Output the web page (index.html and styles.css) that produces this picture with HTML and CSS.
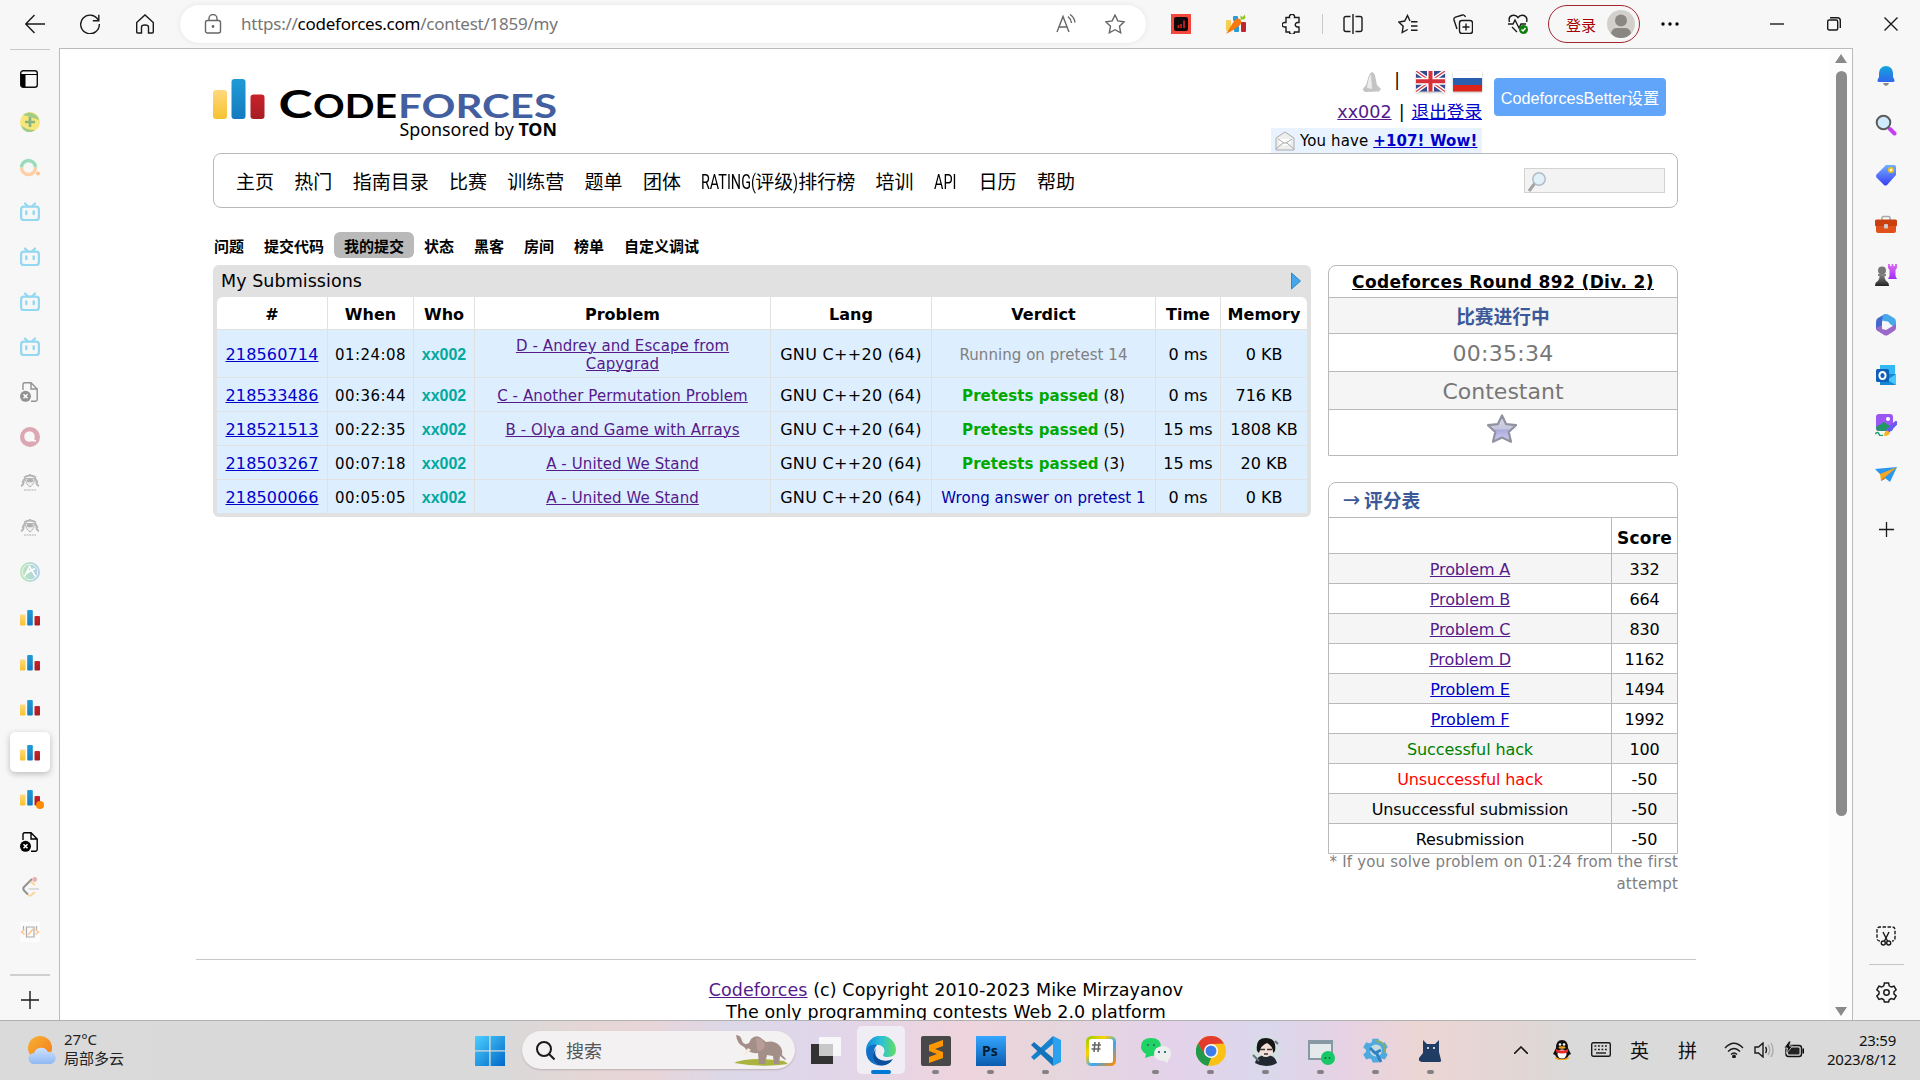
FILE: index.html
```html
<!DOCTYPE html>
<html lang="zh-CN">
<head>
<meta charset="utf-8">
<title>Codeforces</title>
<link rel="stylesheet" href="styles.css">
</head>
<body>
<svg class="defs" width="0" height="0">
  <defs>
    <linearGradient id="gy" x2="0" y2="1"><stop stop-color="#ffd97d"/><stop offset="1" stop-color="#f5c22e"/></linearGradient>
    <linearGradient id="gb" x2="0" y2="1"><stop stop-color="#1f9bd7"/><stop offset="1" stop-color="#147abf"/></linearGradient>
    <linearGradient id="gr" x2="0" y2="1"><stop stop-color="#c9222b"/><stop offset="1" stop-color="#a51d24"/></linearGradient>
    <linearGradient id="gbell" x2="0" y2="1"><stop stop-color="#12a5dd"/><stop offset="1" stop-color="#2f68ee"/></linearGradient>
    <linearGradient id="gtag" x2="0" y2="1"><stop stop-color="#6fb0ff"/><stop offset="1" stop-color="#3a3df5"/></linearGradient>
    <linearGradient id="gpur" x2="0" y2="1"><stop stop-color="#e070f5"/><stop offset="1" stop-color="#a02cf5"/></linearGradient>
    <linearGradient id="gblk" x2="0" y2="1"><stop stop-color="#8a8a8a"/><stop offset="1" stop-color="#222"/></linearGradient>
    <linearGradient id="gwin" x2="1" y2="1"><stop stop-color="#4cd0ff"/><stop offset="1" stop-color="#0067c8"/></linearGradient>
    <linearGradient id="gedge" x2="1" y2="0"><stop stop-color="#1487dc"/><stop offset=".5" stop-color="#2bc0d8"/><stop offset="1" stop-color="#62de62"/></linearGradient>
    <linearGradient id="gstar" x2="0" y2="1"><stop stop-color="#dcdce4"/><stop offset=".5" stop-color="#c6c6de"/><stop offset=".55" stop-color="#acacdc"/><stop offset="1" stop-color="#cfcff4"/></linearGradient>
    <linearGradient id="gps" x2="0" y2="1"><stop stop-color="#35a6ff"/><stop offset="1" stop-color="#0a5cae"/></linearGradient>
    <linearGradient id="gsun" x2="1" y2="1"><stop stop-color="#f9b233"/><stop offset="1" stop-color="#f07a1c"/></linearGradient>
    <linearGradient id="gcloud" x2="0" y2="1"><stop stop-color="#cfe2ff"/><stop offset="1" stop-color="#8fb9f2"/></linearGradient>
    <linearGradient id="gac" x2="1" y2="0"><stop stop-color="#b9e7b4"/><stop offset="1" stop-color="#b0d0ea"/></linearGradient>
    <linearGradient id="gnote" x2="1" y2="1"><stop stop-color="#9bd000"/><stop offset=".3" stop-color="#ffd000"/><stop offset=".6" stop-color="#38a8ff"/><stop offset="1" stop-color="#ff8a00"/></linearGradient>
    <symbol id="cf" viewBox="0 0 20 16"><rect y="4.500" width="5.500" height="11" rx="1" fill="url(#gy)"/><rect x="7.200" width="5.600" height="15.500" rx="1" fill="url(#gb)"/><rect x="14.500" y="6" width="5.500" height="9.500" rx="1" fill="url(#gr)"/></symbol>
    <symbol id="bili" viewBox="0 0 20 20"><path d="M5 1.500 8 4.500M15 1.500 12 4.500" stroke="#93d8f0" stroke-width="2.200" stroke-linecap="round"/><rect x="1.100" y="4.600" width="17.800" height="13.400" rx="2.800" fill="none" stroke="#93d8f0" stroke-width="2.200"/><path d="M6.300 9.500v2.500M13.700 9.500v2.500" stroke="#93d8f0" stroke-width="2.400" stroke-linecap="round"/></symbol>
    <symbol id="doc" viewBox="0 0 20 20"><path d="M3 8V2.500Q3 .8 4.700 .8H11L17.200 7V17.500Q17.200 19.200 15.500 19.200H11M11 .8V7H17.200" fill="none" stroke="currentColor" stroke-width="1.400"/><circle cx="5.500" cy="14.300" r="5.500" fill="currentColor"/><path d="m3.500 12.300 4 4m0-4-4 4" stroke="#fff" stroke-width="1.500"/></symbol>
    <symbol id="atc" viewBox="0 0 20 20"><path d="M10 2v2M4 5.500Q10 1.500 16 5.500M2.500 11Q4 7 5.500 6.500M17.500 11Q16 7 14.500 6.500M1 14Q4 13 3.500 9.500M19 14Q16 13 16.500 9.500" fill="none" stroke="#b5b5b5" stroke-width="1.900"/><path d="M5.500 6.500h9Q14.500 12 10 15 5.500 12 5.500 6.500Z" fill="#eee" stroke="#b5b5b5"/><ellipse cx="10" cy="8.500" rx="3.400" ry="1.800" fill="#b0b0b0"/><path d="M4 18h12" stroke="#c8c8c8" stroke-width="1.600" stroke-dasharray="2 .6"/></symbol>
    <symbol id="gear" viewBox="0 0 20 20"><path d="M8 1h4l.6 2.700 1.900 1.100L17.200 4l2 3.400-2.100 1.900v2l2.100 1.900-2 3.400-2.700-.8-1.900 1.100L12 19H8l-.6-2.100-1.900-1.100-2.700.8-2-3.400 2.100-1.900v-2L.8 7.400 2.800 4l2.700.8 1.900-1.100Z"/><circle cx="10" cy="10" r="2.600"/></symbol>
  </defs>
</svg>

<header class="toolbar">
  <div class="nav-btns">
    <svg class="ln" viewBox="0 0 20 20"><path d="M20 10H1M9.500 1 .8 10l8.700 9"/></svg>
    <svg class="ln" viewBox="0 0 20 20"><path d="M18.300 6.200A9.300 9.300 0 1 0 19.300 10M18.800 .8v6h-6"/></svg>
    <svg class="ln" viewBox="0 0 20 20"><path d="M1.700 8.500 10 .9l8.300 7.600V18q0 1-1 1h-3.800v-6q0-2-3.500-2t-3.500 2v6H2.700q-1 0-1-1Z"/></svg>
  </div>
  <div class="address">
    <svg class="ln lock" viewBox="0 0 18 20"><rect x="1.500" y="6.500" width="15" height="12.500" rx="2"/><path d="M5 6.500V4.500a4 4 0 0 1 8 0v2"/><circle cx="9" cy="12.500" r=".7" fill="#666"/></svg>
    <span class="url">https://<b>codeforces.com</b>/contest/1859/my</span>
    <svg class="ln" viewBox="0 0 20 20"><path d="M1 18 7 2.500 13 18M3 13h8M12 2.500Q15 5 15.500 9M14 .5q4.500 3 5 8"/></svg>
    <svg class="ln" viewBox="0 0 20 20"><path d="m10 1 2.800 5.900 6.400.9-4.700 4.500 1.200 6.500L10 15.700l-5.700 3.100 1.200-6.500L.8 7.800l6.400-.9Z"/></svg>
  </div>
  <div class="exts">
    <svg viewBox="0 0 20 20"><path fill="#f5483c" d="M0 0h20v20H0z"/><rect x="3" y="3" width="14" height="14" rx="2" fill="#100808"/><path d="M7.500 14v-3M10 14v-4M13 14V6.500" stroke="#c4251c" stroke-width="1.700"/></svg>
    <svg viewBox="0 0 20 20"><rect y="6" width="5" height="11" rx="1" fill="#f8cd55"/><rect x="7" y="2" width="5" height="5" rx="1" fill="#2a9bd8"/><rect x="8" y="12" width="5" height="6" rx="1" fill="#2a9bd8"/><rect x="15" y="8" width="5" height="10" rx="1" fill="#c0262d"/><path d="M0 20 8 7q3-4 6.500-1.500 2 3-1 6Q8 16 0 20Z" fill="#f77a0c"/><path d="M14.500 5.500V1.500l2 1.500 2.500-2.500v2.500h1l-2 2.500Z" fill="#8fc926"/></svg>
    <svg class="ln puzzle" viewBox="0 0 20 20"><path d="M4 3.500h3.500a2.600 2.600 0 1 1 5 0H17v5h-1.500a2.200 2.200 0 1 0 0 4.500H17v5h-4.500a2.500 2.500 0 0 1-5 0H4V13H3a2.300 2.300 0 1 1 0-4.500h1Z"/></svg>
    <i class="vbar"></i>
    <svg class="ln" viewBox="0 0 20 20"><path d="M7.500 2.500H3Q1 2.500 1 4.500v11q0 2 2 2h4.500M12.500 2.500H17q2 0 2 2v11q0 2-2 2h-4.500M10 0v20"/></svg>
    <svg class="ln" viewBox="0 0 20 20"><path d="M13 7.700H19.500M13 12h6.500M13 16.300h6.500M12 7 9.500 1.500 6.700 7 .8 8l4.400 4.200-1 6.300 5.500-3"/></svg>
    <svg class="ln" viewBox="0 0 20 20"><rect x="6.500" y="6.500" width="13" height="13" rx="2.500"/><path d="M13 9.500v7M9.500 13h7M4 15 1 6Q.5 4 2.500 3.200L9.500 1q2-.5 3 2"/></svg>
    <svg class="ln" viewBox="0 0 20 20"><path d="M1.500 8Q0 3 4 1.500q4-1 6 2 2-3 6-2 4 2 2.500 6.500M0 10h5l2-4 4 8 2-4h5M4 13l5 5"/><circle cx="15.500" cy="15.500" r="4.500" fill="#107c10" stroke="none"/><path d="m13.500 15.500 1.500 1.500 2.500-3" stroke="#fff"/></svg>
  </div>
  <div class="login"><span>登录</span><svg viewBox="0 0 28 28"><circle cx="14" cy="14" r="14" fill="#d3d0cb"/><circle cx="14" cy="10.500" r="6" fill="#8a8782"/><path d="M4 23.500Q5 18 10 18h8q5 0 6 5.500Q20 28 14 28T4 23.500Z" fill="#8a8782"/></svg></div>
  <svg class="more" viewBox="0 0 18 4"><circle cx="2" cy="2" r="1.700"/><circle cx="9" cy="2" r="1.700"/><circle cx="16" cy="2" r="1.700"/></svg>
  <div class="win-btns">
    <svg class="ln" viewBox="0 0 14 14"><path d="M0 7h14"/></svg>
    <svg class="ln" viewBox="0 0 14 14"><rect x=".7" y="3" width="10" height="10" rx="1.500"/><path d="M3 .7h7.500q2.800 0 2.800 2.800V11"/></svg>
    <svg class="ln" viewBox="0 0 14 14"><path d="m.5 .5 13 13m0-13-13 13"/></svg>
  </div>
</header>

<div class="middle">
<aside class="tabs">
  <svg class="panel" viewBox="0 0 20 20"><rect x=".7" y="1.700" width="16.600" height="16.600" rx="2.500" fill="none" stroke="#111" stroke-width="1.400"/><path d="M1 5.500h4.500V18H3q-2 0-2-2ZM1 5h16.500v1H1z" fill="#000"/></svg>
  <div class="tab"><svg viewBox="0 0 20 20"><circle cx="10" cy="10" r="10" fill="#f7e67a"/><path d="M3 3q6-5 13 0 3 3 3 5Q12 5 3 3ZM1 13q5 5 14 5-5 4-10 1-3-2-4-6Z" fill="#a0cc88"/><path d="M10 5v10M5 10h10" stroke="#86b482" stroke-width="2.600"/></svg></div>
  <div class="tab"><svg viewBox="0 0 20 20"><path d="M1.500 10.500a7 7 0 0 1 14 0" fill="none" stroke="#98dcba" stroke-width="3.400"/><path d="M1.500 10.500a7 7 0 0 0 14 0" fill="none" stroke="#fdd0a5" stroke-width="3.400"/><circle cx="18" cy="16.500" r="2" fill="#fcc18c"/></svg></div>
  <div class="tab"><svg><use href="#bili"/></svg></div>
  <div class="tab"><svg><use href="#bili"/></svg></div>
  <div class="tab"><svg><use href="#bili"/></svg></div>
  <div class="tab"><svg><use href="#bili"/></svg></div>
  <div class="tab dim"><svg><use href="#doc"/></svg></div>
  <div class="tab"><svg viewBox="0 0 20 20"><circle cx="10" cy="10" r="10" fill="#dba7b2"/><circle cx="9.500" cy="9.500" r="5.300" fill="#f7f7f7"/><path d="m11 11 5 3-3.500 0Z" fill="#fff" stroke="#fff"/></svg></div>
  <div class="tab"><svg><use href="#atc"/></svg></div>
  <div class="tab"><svg><use href="#atc"/></svg></div>
  <div class="tab"><svg viewBox="0 0 20 20"><circle cx="10" cy="10" r="10" fill="url(#gac)"/><circle cx="10" cy="10" r="7.800" fill="none" stroke="#fff" stroke-opacity=".7"/><path d="m4.500 14.500 5-10 6 10M7 11.500l4-3 4-2M7 9h5" fill="none" stroke="#fff" stroke-width="1.500"/></svg></div>
  <div class="tab"><svg class="bars"><use href="#cf"/></svg></div>
  <div class="tab"><svg class="bars"><use href="#cf"/></svg></div>
  <div class="tab"><svg class="bars"><use href="#cf"/></svg></div>
  <div class="tab"><span class="tile"><svg class="bars"><use href="#cf"/></svg></span></div>
  <div class="tab"><svg class="bars"><use href="#cf"/></svg><i class="badge"></i></div>
  <div class="tab"><svg><use href="#doc"/></svg></div>
  <div class="tab"><svg viewBox="0 0 20 20"><path d="M12 2 4 10q-1.500 1.500 0 3.500L8 17.500" fill="none" stroke="#929292" stroke-width="2"/><path d="M10.500 4.500 15 8M8 17.500q2 2.500 4 0l3-2.500" fill="none" stroke="#fbd49a" stroke-width="2"/><path d="M8.500 12H19" stroke="#dcdcdc" stroke-width="2"/><circle cx="14.700" cy="2.500" r="2.400" fill="#eab0b0"/></svg></div>
  <div class="tab"><svg viewBox="0 0 20 20"><path fill="#fcfcfc" d="M0 0h20v20H0z"/><path d="M6.500 5h7.500v10H6.500zM3.500 4v4M16.500 4v4" fill="none" stroke="#aaa" stroke-width="1.200"/><path d="M4.500 7.500 1.500 10l3 2.500M15.500 7.500l3 2.500-3 2.500M8 13l5-6" fill="none" stroke="#fbc590" stroke-width="1.500"/></svg></div>
  <i class="sep"></i>
  <svg class="ln plus" viewBox="0 0 18 18"><path d="M9 0v18M0 9h18"/></svg>
</aside>

<main class="viewport">
 <div class="page">
  <div class="head">
    <svg class="logo" viewBox="0 0 344 62">
      <rect y="11" width="14" height="29" rx="3" fill="url(#gy)"/><rect x="18.500" width="14" height="40" rx="3" fill="url(#gb)"/><rect x="37.500" y="15.500" width="14" height="24.500" rx="3" fill="url(#gr)"/>
      <g class="logo-word"><text x="65.500" y="39" font-size="38.500" textLength="34" lengthAdjust="spacingAndGlyphs">C</text><text x="100" y="39" font-size="32" textLength="84" lengthAdjust="spacingAndGlyphs">ODE</text><text x="185" y="39" font-size="32" fill="#445f9f" textLength="159" lengthAdjust="spacingAndGlyphs">FORCES</text></g>
      <text class="sponsor" x="186.500" y="56.500" textLength="157.500" lengthAdjust="spacingAndGlyphs">Sponsored by <tspan font-weight="bold">TON</tspan></text>
    </svg>
    <div class="user">
      <div class="line1">
        <svg width="20" height="20" viewBox="0 0 20 20"><path d="M10 0q3 1 3.500 6L15 13l4 4-2 2.500-14 .5-2.500-2.500L4 13l2.500-8Q7.500 1 10 0Z" fill="#c4c4c4"/><path d="M9 2Q6 7 5 16l5 1Z" fill="#ececec"/></svg>
        <span>|</span>
        <svg class="flag" width="29" height="22" viewBox="0 0 29 22"><path fill="#36498f" d="M0 0h29v20.500H0z"/><path d="m0 0 29 20.500M29 0 0 20.500" stroke="#fff" stroke-width="4"/><path d="m0 0 29 20.500M29 0 0 20.500" stroke="#d8404a" stroke-width="1.400"/><path d="M14.500 0v20.500M0 10.200h29" stroke="#fff" stroke-width="7"/><path d="M14.500 0v20.500M0 10.200h29" stroke="#d8303a" stroke-width="4"/></svg>
        <svg class="flag" width="29" height="22" viewBox="0 0 29 22"><path fill="#fff" d="M0 0h29v7H0z"/><path fill="#2a5fb0" d="M0 7h29v7H0z"/><path fill="#dc2418" d="M0 14h29v6.500H0z"/></svg>
      </div>
      <div class="line2"><a class="v">xx002</a><span>|</span><a>退出登录</a></div>
      <div class="line3"><svg width="20" height="20" viewBox="0 0 20 20"><path d="M1 7 10 1l9 6v12H1Z" fill="#eee" stroke="#aaa"/><path d="M4 8h12v4l-6 3-6-3Z" fill="#fff"/><path d="m1 18 7-6h4l7 6M3 8l6 4M17 8l-6 4" fill="none" stroke="#aaa"/></svg><span>You have</span><a>+107! Wow!</a></div>
    </div>
    <div class="better">CodeforcesBetter设置</div>
  </div>

  <nav class="menu">
    <a>主页</a><a>热门</a><a>指南目录</a><a>比赛</a><a>训练营</a><a>题单</a><a>团体</a><a class="rating"><i>RATING(</i>评级<i>)</i>排行榜</a><a>培训</a><a class="api"><i>API</i></a><a>日历</a><a>帮助</a>
    <div class="search"><svg width="20" height="22" viewBox="0 0 20 22"><path d="M8 12 2 20" stroke="#a4a4a4" stroke-width="3"/><circle cx="12" cy="8" r="6.200" fill="#dff1fb" stroke="#b4bcc4" stroke-width="1.500"/></svg></div>
  </nav>

  <nav class="submenu"><a>问题</a><a>提交代码</a><a class="on">我的提交</a><a>状态</a><a>黑客</a><a>房间</a><a>榜单</a><a>自定义调试</a></nav>

  <div class="columns">
    <section class="subs">
      <div class="subs-title"><span>My Submissions</span><svg width="10" height="18" viewBox="0 0 10 18"><path d="M.5 1 9.500 9 .5 17Z" fill="#45a6ea" stroke="#2f86cc"/></svg></div>
      <table>
        <colgroup><col class="c1"><col class="c2"><col class="c3"><col class="c4"><col class="c5"><col class="c6"><col class="c7"><col class="c8"></colgroup>
        <tr><th>#</th><th>When</th><th>Who</th><th>Problem</th><th>Lang</th><th>Verdict</th><th>Time</th><th>Memory</th></tr>
        <tr class="tall"><td class="id"><a>218560714</a></td><td class="when">01:24:08</td><td class="who">xx002</td><td class="prob"><a class="v">D - Andrey and Escape from<br>Capygrad</a></td><td class="lang">GNU C++20 (64)</td><td class="verdict run">Running on pretest 14</td><td>0 ms</td><td>0 KB</td></tr>
        <tr><td class="id"><a>218533486</a></td><td class="when">00:36:44</td><td class="who">xx002</td><td class="prob"><a class="v">C - Another Permutation Problem</a></td><td class="lang">GNU C++20 (64)</td><td class="verdict"><b>Pretests passed</b> (8)</td><td>0 ms</td><td>716 KB</td></tr>
        <tr><td class="id"><a>218521513</a></td><td class="when">00:22:35</td><td class="who">xx002</td><td class="prob"><a class="v">B - Olya and Game with Arrays</a></td><td class="lang">GNU C++20 (64)</td><td class="verdict"><b>Pretests passed</b> (5)</td><td>15 ms</td><td>1808 KB</td></tr>
        <tr><td class="id"><a>218503267</a></td><td class="when">00:07:18</td><td class="who">xx002</td><td class="prob"><a class="v">A - United We Stand</a></td><td class="lang">GNU C++20 (64)</td><td class="verdict"><b>Pretests passed</b> (3)</td><td>15 ms</td><td>20 KB</td></tr>
        <tr><td class="id"><a>218500066</a></td><td class="when">00:05:05</td><td class="who">xx002</td><td class="prob"><a class="v">A - United We Stand</a></td><td class="lang">GNU C++20 (64)</td><td class="verdict wrong">Wrong answer on pretest 1</td><td>0 ms</td><td>0 KB</td></tr>
      </table>
    </section>

    <aside class="side">
      <div class="box contest">
        <div class="r1"><a>Codeforces Round 892 (Div. 2)</a></div>
        <div class="r2">比赛进行中</div>
        <div class="r3">00:35:34</div>
        <div class="r4">Contestant</div>
        <div class="r5"><svg width="32" height="32" viewBox="0 0 32 32"><path d="m16 2.500 4.200 8.700 9.800 1-7.300 6.800 2.300 9.800L16 24.500 7 28.800l2.300-9.800L2 12.200l9.800-1Z" fill="url(#gstar)" stroke="#9092a0" stroke-width="2.200" stroke-linejoin="round"/></svg></div>
      </div>
      <div class="box scores">
        <div class="cap"><span>→</span>评分表</div>
        <div class="row first"><div></div><div>Score</div></div>
        <div class="row"><div><a class="v">Problem A</a></div><div>332</div></div>
        <div class="row"><div><a class="v">Problem B</a></div><div>664</div></div>
        <div class="row"><div><a class="v">Problem C</a></div><div>830</div></div>
        <div class="row"><div><a class="v">Problem D</a></div><div>1162</div></div>
        <div class="row"><div><a>Problem E</a></div><div>1494</div></div>
        <div class="row"><div><a>Problem F</a></div><div>1992</div></div>
        <div class="row"><div class="ok">Successful hack</div><div>100</div></div>
        <div class="row"><div class="bad">Unsuccessful hack</div><div>-50</div></div>
        <div class="row"><div>Unsuccessful submission</div><div>-50</div></div>
        <div class="row"><div>Resubmission</div><div>-50</div></div>
      </div>
      <p class="hint">* If you solve problem on 01:24 from the first<br>attempt</p>
    </aside>
  </div>
  <footer class="foot"><div><a class="v">Codeforces</a> (c) Copyright 2010-2023 Mike Mirzayanov</div><div>The only programming contests Web 2.0 platform</div></footer>
 </div>
 <div class="scroll"><i class="up"></i><i class="thumb"></i><i class="down"></i></div>
</main>

<aside class="rail">
  <div><svg viewBox="0 0 22 22"><path d="M4 18q-2 0-1.500-2L4 13V9a7 7 0 0 1 14 0v4l1.500 3q.5 2-1.500 2Z" fill="url(#gbell)"/><path d="M8 19h6q-1 3-3 3t-3-3Z" fill="#888"/></svg></div>
  <div><svg viewBox="0 0 22 22"><path d="m15 15 4.500 4.500" stroke="#c540f5" stroke-width="4" stroke-linecap="round"/><circle cx="8.500" cy="8.500" r="6.800" fill="#cfeafc" stroke="#5c5c5c" stroke-width="2"/></svg></div>
  <div><svg viewBox="0 0 22 22"><path d="M11 1h8q2 0 2 2v8L12 21q-1.500 1-3 0L1.500 13.500q-1-1.500 0-3Z" fill="url(#gtag)"/><circle cx="16" cy="6" r="2.200" fill="#ffd" stroke="#f0c020" stroke-width="1.700"/></svg></div>
  <div><svg viewBox="0 0 22 22"><path d="M7 6V4q0-1.500 1.500-1.500h5Q15 2.500 15 4v2" fill="none" stroke="#a9a9a9" stroke-width="1.600"/><rect y="5.500" width="22" height="7" rx="1.500" fill="#c8400f"/><path d="M1 12h20v5q0 2-2 2H3q-2 0-2-2Z" fill="#e0501a"/><rect x="9" y="10" width="4" height="4.500" rx="1" fill="#ccc"/></svg></div>
  <div><svg viewBox="0 0 22 22"><path d="M13 0h2v2h1.500V0h2v2H20V0h2v4l-1.500 2v6l1.500 3h-9l1.500-3V6L13 4Z" fill="url(#gpur)"/><circle cx="7" cy="6.500" r="4" fill="#777"/><path d="M3 10h8v2H9.500q0 4 3 6 1.500 1 1.500 4H0q0-3 1.500-4 3-2 3-6H3Z" fill="url(#gblk)"/></svg></div>
  <div><svg viewBox="0 0 22 22"><path d="M10 0 3 4Q1 5 1 8v6q0 2 2 3l4 2V8Z" fill="#4468cc"/><path d="M10 0q1-.5 3 .5L19 4q2 1 2 4v6l-6-4-8-4 1-5Z" fill="#45a9ec"/><path d="m1 14 6-3v4l4 1 10-6v4q0 2-2 3l-6 4q-2 1-4 0l-6-4q-2-1-2-3Z" fill="#9a68c8"/><circle cx="11" cy="11" r="3.800" fill="#f7f7f7"/></svg></div>
  <div><svg viewBox="0 0 22 22"><rect x="5" y="1" width="15" height="10" fill="#31b9f5"/><path d="M5 10h16v11H5z" fill="#1787d4"/><path d="m21 10-9 6 9 5Z" fill="#42c8fa"/><rect x="1" y="5" width="13" height="13" rx="1.500" fill="#0f5fb8"/><ellipse cx="7.500" cy="11.500" rx="3.100" ry="3.600" fill="none" stroke="#fff" stroke-width="2"/></svg></div>
  <div><svg viewBox="0 0 22 22"><rect x="1" width="17" height="17" rx="3" fill="#9b57f2"/><circle cx="13" cy="5" r="2" fill="#fff"/><path d="m1 13 8-5 9 6q0 3-3 3H4q-3 0-3-4Z" fill="#22966a"/><path d="m21 9-8 8" stroke="#6b5af0" stroke-width="4" stroke-linecap="round"/><path d="M9 22q0-5 3.500-5.500L15 19q-1 3-6 3Z" fill="#f5b51e"/><path d="M0 20q3-3 4 0t4 1" stroke="#1ca372" stroke-width="1.500" fill="none"/></svg></div>
  <div><svg viewBox="0 0 22 22"><path d="M0 5 22 3 15 18 10 14 6 17V11Z" fill="#2b96ee"/><path d="M5 10 22 3 9 14 6 17Z" fill="#f5a623"/><path d="m9 13-3 4 4-2Z" fill="#c77a0c"/></svg></div>
  <svg class="ln rplus" viewBox="0 0 16 16"><path d="M8 0v16M0 8h16"/></svg>
  <svg class="ln snip" viewBox="0 0 20 20"><path d="M4 15Q1 15 1 12V4q0-3 3-3h12q3 0 3 3v8q0 3-3 3" stroke-dasharray="3.500 1.500"/><path d="m7 6 4.500 9M13 6l-4.500 9"/><circle cx="7.300" cy="17" r="2"/><circle cx="12.700" cy="17" r="2"/></svg>
  <i class="rsep"></i>
  <svg class="ln rgear" viewBox="0 0 20 20"><use href="#gear"/></svg>
</aside>
</div>

<footer class="taskbar">
  <div class="weather"><svg width="30" height="30" viewBox="0 0 30 30"><circle cx="13" cy="12" r="12" fill="url(#gsun)"/><path d="M7 28a5.500 5.500 0 0 1 0-11 7.500 7.500 0 0 1 14-1 6 6 0 0 1 3 12Z" fill="url(#gcloud)"/></svg><div>27°C<br>局部多云</div></div>
  <div class="app"><svg viewBox="0 0 30 30"><path d="M0 0h14.200v14.200H0zM15.600 0H30v14.200H15.600zM0 15.600h14.200V30H0zM15.600 15.600H30V30H15.600z" fill="url(#gwin)"/></svg></div>
  <div class="find"><svg class="ln" width="19" height="19" viewBox="0 0 19 19"><circle cx="8" cy="8" r="7"/><path d="m13 13 5.500 5.500"/></svg><span>搜索</span>
    <svg class="ele" width="54" height="32" viewBox="0 0 54 32"><path d="M0 29q15-7 50-2l4 3q-25 4-54-1Z" fill="#a9b33e"/><path d="M2 1q5 0 6 6 2 5 7 2l2-4q5-5 10-1l5 4q8-2 13 3 4 4 3 10l4 4-1 1-5-4-1 8h-5l-1-8-6-1-2 9h-6l-1-11q-9 1-14-6Q3 10 2 1Z" fill="#a48f88"/><path d="M22 4q8 0 9 8-3 7-8 4Z" fill="#b79c98"/><path d="m14 14-4 6 1 1 6-5Z" fill="#f6ecd8"/></svg></div>
  <div class="app"><svg viewBox="0 0 30 30"><path fill="#333" d="M0 8h22v20H0z"/><path fill="#fafafa" fill-opacity=".9" d="M8 1h22v19H8z"/><path fill="#c8c8c8" d="M8 8h14v12H8z"/></svg></div>
  <div class="app cur"><span><svg viewBox="0 0 30 30"><path d="M0 15A15 15 0 0 1 30 14q0 7-8 7-5 0-5-2 3-4 0-8Q11 6 3 12Z" fill="url(#gedge)"/><path d="M0 15q4-8 11-6-6 6-1 14 5 6 14 3-8 6-16 2Q0 24 0 15Z" fill="#126fc4"/><path d="M10 12q-3 9 5 12 6 2 12-1-5 8-14 6-10-6-3-17Z" fill="#0c4f9c"/></svg><i></i></span></div>
  <div class="app"><svg viewBox="0 0 30 30"><rect width="30" height="30" rx="2" fill="#484848"/><path d="M22 4v6l-8 3 8 3v6L8 27v-6l8-3-8-3V9Z" fill="#ff9800"/></svg><i></i></div>
  <div class="app"><svg viewBox="0 0 30 30"><path fill="url(#gps)" d="M0 0h30v30H0z"/><text class="ps" x="6" y="20">Ps</text></svg><i></i></div>
  <div class="app"><svg viewBox="0 0 30 30"><path d="m22 0 8 4v22l-8 4Z" fill="#2aa0ee"/><path d="M22 0v8L3 24l-3-3Z" fill="#1482ce"/><path d="M22 30v-8L3 6 0 9Z" fill="#1273ba"/></svg><i></i></div>
  <div class="app"><svg viewBox="0 0 30 30"><rect x="1.500" y="1.500" width="27" height="27" rx="4" fill="#fff" stroke="url(#gnote)" stroke-width="3"/><path d="M9 6 8 16M13 6l-1 10M6 9h9M5.500 13h9" stroke="#666" stroke-width="1.600"/></svg></div>
  <div class="app"><svg viewBox="0 0 30 30"><path d="M10 2q10 0 10 9t-10 9l-6 2 1-4q-5-3-5-7 0-9 10-9Z" fill="#1fd365"/><path d="M21 10q9 0 9 8 0 4-3 6v3l-4-2q-10 0-10-7t8-8Z" fill="#eee"/><path d="M7 8v2m6-2v2M18 15v2m6-2v2" stroke="#377" stroke-width="2"/></svg><i></i></div>
  <div class="app"><svg viewBox="0 0 30 30"><circle cx="15" cy="15" r="15" fill="#fbc116"/><path d="M2 7.500A15 15 0 0 1 28 7.500L15 8l-6.500 11Z" fill="#e33b2e"/><path d="M2 7.500 9 19l6 3-3 8A15 15 0 0 1 2 7.500Z" fill="#229a4c"/><circle cx="15" cy="15" r="7" fill="#fff"/><circle cx="15" cy="15" r="5.500" fill="#3d7de8"/></svg><i></i></div>
  <div class="app"><svg viewBox="0 0 30 30"><circle cx="15" cy="15" r="15" fill="#d3dfe2"/><path d="M4 27q2-8 11-8t11 8q-5 3-11 3T4 27Z" fill="#222831"/><path d="M8 9q7-6 14 0v6q-2 6-7 6t-7-6Z" fill="#f4dfd6"/><path d="M6 15Q4 2 15 2t9 13l-2 2q0-7-6-10-6 2-8 10Z" fill="#161616"/><path d="M9 13.500h5m2 0h5M13 18h4" stroke="#333" stroke-width="1.400"/><path d="m2 19 6 6M24 5l3 3" stroke="#68747b" stroke-width="2"/></svg><i></i></div>
  <div class="app"><svg viewBox="0 0 30 30"><rect x="3" y="5" width="23" height="18" fill="#e4e9ec" stroke="#8799a5" stroke-width="2"/><path d="M3 5h23v3H3z" fill="#8799a5"/><circle cx="22" cy="22" r="7" fill="#18c765"/><path d="M19.500 21v2m4-2v2" stroke="#164" stroke-width="1.500"/></svg><i></i></div>
  <div class="app"><svg viewBox="0 0 30 30"><g fill="#50a9df" stroke="#50a9df"><use href="#gear" x="2" y="2" width="25" height="25"/></g><path d="M14 5q11 0 10 12" stroke="#7fae74" stroke-width="2" fill="none"/><circle cx="15" cy="14.500" r="6" fill="#c7dbe2"/><path d="m9 12 5 5 6-3M15 16l5 10" stroke="#3182c3" stroke-width="3" fill="none"/></svg><i></i></div>
  <div class="app"><svg viewBox="0 0 30 30"><path d="m7 4 4 4h8l4-4v12l2 8q1 2-3 2H7q-5 0-4-4l4-5Z" fill="#223d64"/><path d="M12 11v2m6-2v2" stroke="#fff" stroke-width="1.500"/></svg><i></i></div>
  <div class="tray">
    <svg class="ln" width="14" height="8" viewBox="0 0 14 8"><path d="m0 8 7-7 7 7" stroke-width="1.600"/></svg>
    <svg width="18" height="20" viewBox="0 0 18 20"><ellipse cx="9" cy="18" rx="7" ry="2" fill="#f5a31b"/><path d="M9 0q6 0 6 8l3 6-2 1q-2 4-7 4t-7-4l-2-1 3-6q0-8 6-8Z" fill="#111"/><ellipse cx="9" cy="14" rx="4.500" ry="4.500" fill="#fff"/><path d="M3 9q6 3 12 0v3q-6 3-12 0Z" fill="#e52a2a"/><ellipse cx="9" cy="7.500" rx="3.500" ry="1.200" fill="#f5a31b"/><circle cx="7" cy="4.500" r="1.300" fill="#fff"/><circle cx="11" cy="4.500" r="1.300" fill="#fff"/></svg>
    <svg class="ln kb" width="20" height="15" viewBox="0 0 20 15"><rect x=".7" y=".7" width="18.600" height="13.600" rx="1.500"/><path d="M3.500 4h13M3.500 7.500h13" stroke-dasharray="1.800 1.700"/><path d="M5 11h10"/></svg>
    <span class="en">英</span><span class="py">拼</span>
    <svg class="ln" width="20" height="16" viewBox="0 0 20 16"><path d="M1 6Q10-3.500 19 6M4 9.500q6-6 12 0M7 12.500q3-3 6 0"/><circle cx="10" cy="14.500" r="1.200" fill="#111"/></svg>
    <svg class="ln spk" width="20" height="16" viewBox="0 0 20 16"><path d="M1 5h3.500L9 1v14l-4.500-4H1Zm10.500 0q2 3 0 6"/><path d="M14 3q3.500 5 0 10M17 1q4 7 0 14" stroke="#aaa"/></svg>
    <svg width="21" height="18" viewBox="0 0 21 18"><rect x="2" y="4.500" width="15.500" height="11" rx="2.500" fill="none" stroke="#111" stroke-width="1.400"/><rect x="4" y="6.500" width="11.500" height="7" rx="1" fill="#222"/><path d="M18.500 7.500H20v5h-1.500z"/><path d="M5 0 0 7h3.500L2.500 12.500 8.500 5H5.500L7 0Z" fill="#111" stroke="#d9d9d9" stroke-width=".8"/></svg>
    <div class="clock">23:59<br>2023/8/12</div>
  </div>
</footer>
</body>
</html>
```
FILE: styles.css
```css
* { box-sizing: border-box; }
html, body { height: 100%; }
body { margin: 0; overflow: hidden; display: grid; grid-template-rows: 48px 972px 60px; background: #f7f7f7; color: #000; font-family: "DejaVu Sans", "Noto Sans CJK SC", sans-serif; font-size: 16px; }
.defs { position: absolute; }
svg { display: block; flex: none; }
i { font-style: normal; display: block; }
.ln { fill: none; stroke: #1a1a1a; stroke-width: 1.4; }
a { color: #0000cc; text-decoration: underline; text-decoration-thickness: 1px; }
a.v { color: #551a8b; }

/* browser toolbar */
.toolbar { display: flex; align-items: center; height: 48px; }
.toolbar svg { width: 20px; height: 20px; }
.nav-btns { display: flex; gap: 35px; padding-left: 25px; width: 180px; }
.address { display: flex; align-items: center; width: 966px; height: 38px; border-radius: 19px; background: #fff; padding: 0 21px 0 24px; box-shadow: 0 0 5px #e4e4e4; }
.address .ln { stroke: #666; }
.address .lock { width: 18px; margin-right: 19px; }
.address .ln + .ln { margin-left: 29px; }
.url { flex: 1; font: 17px/24px "Noto Sans", sans-serif; color: #767676; letter-spacing: -.25px; }
.url b { font-weight: normal; color: #000; }
.exts { display: flex; align-items: center; gap: 35px; width: 402px; padding-left: 25px; }
.puzzle { margin-left: 1px; }
.vbar { width: 1px; height: 20px; background: #c8c8c8; margin: 0 -15px; }
.login { width: 92px; height: 38px; border: 1.5px solid #a4262c; border-radius: 19px; display: flex; align-items: center; justify-content: space-between; padding: 0 4px 0 17px; color: #a80000; font: 15px "Noto Sans CJK SC", sans-serif; }
.login svg { width: 28px; height: 28px; }
.toolbar .more { width: 18px; height: 4px; margin-left: 21px; }
.win-btns { display: flex; gap: 43px; margin-left: 91px; }
.win-btns svg { width: 14px; height: 14px; }

.middle { display: grid; grid-template-columns: 59px 1794px 67px; }

/* vertical tabs */
.tabs { display: flex; flex-direction: column; align-items: center; border-top: 1px solid #f7f7f7; background: linear-gradient(#c8c8c8, #c8c8c8) 10px 0 / 40px 1px no-repeat; padding-left: 1px; }
.tabs .panel { width: 20px; height: 20px; margin: 20px 0 10px; }
.tab { height: 45px; display: flex; align-items: center; justify-content: center; position: relative; }
.tab svg { width: 20px; height: 20px; }
.tab .bars { height: 16px; margin-top: 3px; }
.tab.dim { color: #929292; }
.tile { width: 40px; height: 40px; border-radius: 5px; background: #fff; box-shadow: 0 2px 6px #bbb; display: grid; place-items: center; }
.badge { position: absolute; right: -4px; bottom: 10px; width: 8px; height: 8px; border-radius: 50%; background: #ff8c00; }
.sep { width: 40px; height: 2px; background: #cfcfcf; margin-top: 20px; }
.plus { width: 18px; height: 18px; margin-top: 15px; }

/* page */
.viewport { display: flex; justify-content: space-between; overflow: hidden; background: #fff; border: 1px solid #bbb; border-bottom: 0; }
.page { width: 1500px; margin-left: 136px; }
.head { display: flex; height: 104px; padding-left: 17px; }
.logo { width: 344px; height: 62px; margin-top: 30px; }
.logo-word { font-family: Lato, sans-serif; font-weight: bold; }
.sponsor { font-family: "Noto Sans"; font-size: 18px; }
.user { margin-left: auto; width: 211px; padding-top: 22px; display: flex; flex-direction: column; align-items: flex-end; }
.line1 { display: flex; height: 22px; align-items: center; }
.line1 span { margin: -4px 16px 0 12px; font-size: 17px; }
.flag { filter: drop-shadow(0 1px 1px #bbb); }
.flag + .flag { margin-left: 8px; }
.line2 { display: flex; gap: 7px; height: 34px; line-height: 38px; font-size: 17.6px; margin-bottom: 1px; }
.line3 { display: flex; align-items: center; width: 211px; height: 25px; padding-left: 4px; background: #e8f3ff; font-size: 15px; }
.line3 span { margin: 0 5px 0 5px; letter-spacing: .1px; }
.line3 a { font-weight: bold; letter-spacing: .12px; }
.better { width: 172px; height: 38px; margin: 29px 30px 0 12px; border-radius: 4px; background: #60a5fa; color: #fff; font: 16.2px/41px "Liberation Sans", "Noto Sans CJK SC", sans-serif; text-align: center; white-space: nowrap; }
.menu { display: flex; align-items: center; gap: 20.3px; margin: 0 17px; width: 1465px; height: 55px; border: 1px solid #b9b9b9; border-radius: 8px; padding: 0 12px 0 22px; font: 19px "Noto Sans CJK SC", sans-serif; }
.menu a { color: #000; text-decoration: none; white-space: nowrap; }
.menu i { display: inline-block; font-family: Roboto, sans-serif; font-size: 20px; transform: scaleX(.72); transform-origin: 0 50%; }
.rating { width: 154px; display: flex; align-items: baseline; }
.rating i:first-child { width: 54px; }
.rating i { width: 5px; }
.api { width: 24.5px; }
.search { margin-left: auto; width: 141px; height: 25px; border: 1px solid #d2d2d2; background: #f3f3f3; padding: 2px 2px; }
.submenu { display: flex; height: 26px; margin: 24px 0 7px 8px; font: bold 15px/28px "Noto Sans CJK SC", sans-serif; }
.submenu a { color: #000; text-decoration: none; padding: 0 10px; }
.submenu .on { background: #b9b9b9; border-radius: 6px; }
.columns { display: flex; justify-content: space-between; margin: 0 18px 0 17px; height: 694px; }

.subs { width: 1098px; height: 252px; background: #e1e1e1; border-radius: 6px; padding: 0 4px; }
.subs-title { display: flex; align-items: center; justify-content: space-between; height: 32px; padding: 0 6px 0 4px; font-size: 17.5px; line-height: 34px; letter-spacing: .05px; }
.subs table { width: 1090px; table-layout: fixed; border-spacing: 0; background: #fff; border-radius: 6px 6px 0 0; overflow: hidden; text-align: center; }
.subs tr { height: 34px; }
.subs tr.tall { height: 48px; }
.subs tr:first-child { height: 33px; }
.subs td, .subs th { padding: 2px 0 0; border: solid #e1e1e1; border-width: 0 1px 1px 0; white-space: nowrap; }
.subs td:last-child, .subs th:last-child { border-right: 0; }
.subs td { background: #ddeeff; }
.c1 { width: 111px; } .c2 { width: 86px; } .c3 { width: 61px; } .c4 { width: 296px; } .c5 { width: 161px; } .c6 { width: 224px; } .c7 { width: 65px; } .c8 { width: 86px; }
.id { letter-spacing: .15px; }
.lang { letter-spacing: .3px; }
.when { font-size: 15px; letter-spacing: .45px; }
.subs .who { font: bold 16px "Liberation Sans", sans-serif; color: #03a89e; }
.prob { font-size: 15px; line-height: 18px; letter-spacing: .1px; }
.verdict { font-size: 15px; letter-spacing: .05px; }
.verdict b { color: #00a900; }
.run { color: #808080; }
.wrong { color: #0000a8; }

.side { width: 350px; }
.box { border: 1px solid #b9b9b9; border-radius: 8px 8px 0 0; text-align: center; }
.contest > div { border-bottom: 1px solid #b9b9b9; }
.contest .r1 { height: 32px; line-height: 33px; font-size: 17px; font-weight: bold; letter-spacing: .38px; }
.r1 a { color: #000; }
.contest .r2 { height: 36px; background: #f5f5f5; font: bold 18.75px/36px "Noto Sans CJK SC", sans-serif; color: #3b5998; }
.contest .r3, .contest .r4 { height: 38px; line-height: 39px; font-size: 22px; color: #777; }
.contest .r3 { letter-spacing: .3px; }
.contest .r4 { background: #f5f5f5; }
.contest .r5 { height: 45px; border: 0; padding: 3px 0 0 157px; }
.scores { margin-top: 26px; }
.cap { display: flex; height: 35px; border-bottom: 1px solid #b9b9b9; padding-left: 10px; font: bold 18.75px/34px "Noto Sans CJK SC", sans-serif; color: #3b5998; }
.cap span { width: 25px; font-weight: normal; font-size: 21px; font-family: "DejaVu Sans"; }
.row { display: grid; grid-template: 100% / 283px 1fr; height: 30px; line-height: 31px; }
.row > div { border-bottom: 1px solid #b9b9b9; letter-spacing: -.12px; }
.row > div:first-child { border-right: 1px solid #b9b9b9; }
.row:last-child > div { border-bottom: 0; }
.row:nth-child(odd) { background: #f5f5f5; }
.row.first { height: 36px; line-height: 40px; font-weight: bold; font-size: 17px; }
.row.first > div { letter-spacing: .2px; }
.row:last-child { height: 29px; }
.ok { color: green; }
.bad { color: red; }
.hint { margin: -3px 0 0 -10px; text-align: right; font-size: 15px; line-height: 22px; letter-spacing: .19px; color: #808080; }
.foot { border-top: 1px solid #c8c8c8; padding-top: 19px; text-align: center; font-size: 17.5px; line-height: 22px; letter-spacing: .08px; }

.scroll { width: 22px; background: #fcfcfc; display: flex; flex-direction: column; align-items: center; padding: 5px 0 4px 0; }
.up, .down { border: 6px solid transparent; }
.up { border-top: 0; border-bottom: 9px solid #8a8a8a; }
.down { border-bottom: 0; border-top: 9px solid #8a8a8a; margin-top: auto; }
.thumb { width: 11px; height: 745px; margin-top: 8px; border-radius: 6px; background: #8b8b8b; }

/* edge sidebar */
.rail { display: flex; flex-direction: column; align-items: center; padding: 2px 1px 0 0; }
.rail > div { height: 50px; display: grid; place-items: center; }
.rail > div svg { width: 22px; height: 22px; }
.rplus { width: 15px; height: 15px; margin-top: 22px; }
.snip { width: 20px; height: 20px; margin-top: auto; }
.rsep { width: 35px; height: 1px; background: #c4c4c4; margin: 18px 0 17px; }
.rgear { width: 21px; height: 21px; margin-bottom: 17px; }

/* taskbar */
.taskbar { display: flex; align-items: stretch; border-top: 1px solid #b0b0b0; background: linear-gradient(90deg, #dadada 0, #d9d9d9 26%, #e6d6d6 31%, #e8d5d9 34%, #dcd8e8 38%, #e0d6ea 43%, #eed4dd 50%, #e6d6dc 55%, #e4d2ea 61%, #dad8ec 66%, #e6d2e4 70%, #ecd6d4 74%, #e2d6d5 79%, #dadada 82%); }
.weather { display: flex; width: 462px; padding: 9px 0 0 27px; gap: 7px; font: 15px/19px "Noto Sans", "Noto Sans CJK SC", sans-serif; color: #222; }
.weather svg { margin-top: 6px; }
.app { width: 55px; display: flex; justify-content: center; position: relative; padding-top: 15px; }
.app svg { width: 30px; height: 30px; }
.app > i { position: absolute; bottom: 6px; width: 7px; height: 4px; border-radius: 2px; background: #858085; }
.cur { padding-top: 5px; }
.cur span { width: 48px; height: 48px; border-radius: 5px; background: #f0edf4; display: flex; flex-direction: column; align-items: center; padding-top: 10px; }
.cur i { width: 20px; height: 4px; border-radius: 2px; background: #0078d4; margin-top: 4px; }
.ps { font: bold 14px "Noto Sans"; fill: #001d33; }
.find { width: 273px; height: 38px; margin: 10px 3px 0 5px; border-radius: 19px; background: #f4f1f3; box-shadow: 0 1px 2px #b9b0b4; display: flex; align-items: center; padding: 0 7px 0 14px; font: 18px "Noto Sans CJK SC", sans-serif; color: #555; }
.find .ln { stroke-width: 2; margin-right: 11px; }
.ele { margin-left: auto; }
.tray { flex: 1; display: flex; align-items: center; padding: 0 24px 2px 56px; color: #111; font: 19px "Noto Sans CJK SC", sans-serif; }
.tray > * + * { margin-left: 25px; }
.tray .kb { margin-left: 20px; }
.tray .en { margin-left: 19px; }
.tray .py { margin-left: 29px; }
.tray .py + svg { margin-left: 27px; }
.tray .spk, .tray .spk + svg { margin-left: 10px; }
.tray .clock { margin-left: auto; text-align: right; font: 15px/19px "Noto Sans", sans-serif; letter-spacing: -.25px; }
```
